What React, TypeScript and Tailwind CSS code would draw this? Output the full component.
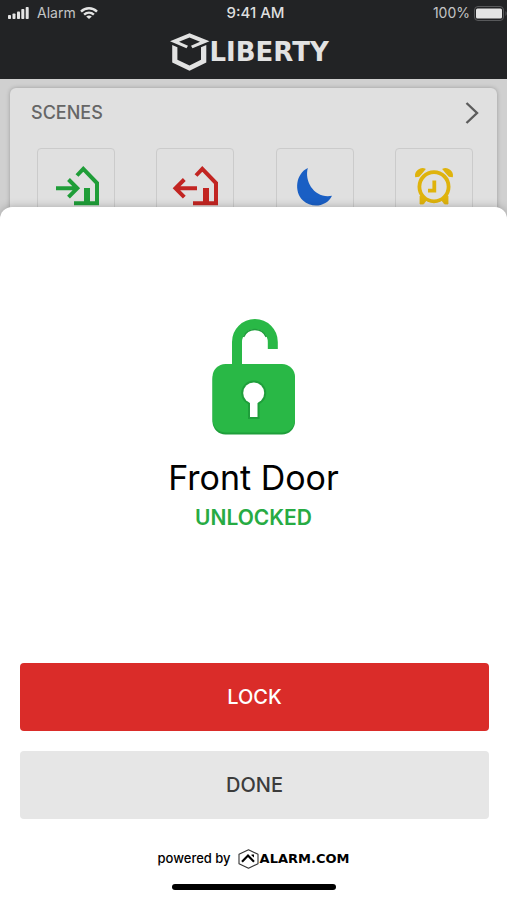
import React from 'react';

const HousePath = () => (
  <>
    <path d="M25 12.5 L31.3 5.8 L45 20 V40.2 H22" fill="none" stroke="currentColor" strokeWidth="4" />
    <path d="M32 25 H38 V40 H32 Z" fill="currentColor" />
  </>
);

const ArriveIcon = () => (
  <svg className="size-12 shrink-0 text-[#1f9d38]" viewBox="0 0 48 48" aria-hidden="true">
    <path d="M4 25.3 H25 M16.5 16.5 L25.3 25.3 L16.5 34.2" fill="none" stroke="currentColor" strokeWidth="4" />
    <HousePath />
  </svg>
);

const LeaveIcon = () => (
  <svg className="size-12 shrink-0 text-[#c22522]" viewBox="0 0 48 48" aria-hidden="true">
    <path d="M26 25.3 H5 M13.3 16.5 L4.5 25.3 L13.3 34.2" fill="none" stroke="currentColor" strokeWidth="4" />
    <HousePath />
  </svg>
);

const MoonIcon = () => (
  <svg className="size-12 shrink-0 text-[#1a5fc4]" viewBox="0 0 48 48" aria-hidden="true">
    <path d="M16.8 5 C13 19 24 36 41 32.8 C36 43.5 21 46 12 37.5 C2.5 28.5 5 10.5 16.8 5 Z" fill="currentColor" />
  </svg>
);

const ClockIcon = () => (
  <svg className="size-12 shrink-0 text-[#dfb30c]" viewBox="0 0 48 48" fill="none" stroke="currentColor" aria-hidden="true">
    <circle cx="24" cy="23.7" r="14.6" strokeWidth="3.8" />
    <path d="M24.3 17.5 V27.6 H18" strokeWidth="3.8" />
    <path d="M5.8 13.5 C5 8.5 10.5 4.5 14.7 6.2 L12 9.5 L8.8 13 Z M42.2 13.5 C43 8.5 37.5 4.5 33.3 6.2 L36 9.5 L39.2 13 Z" fill="currentColor" strokeWidth="1.4" />
    <path d="M10 33 V41 H13.5 L16.5 37 Z M38 33 V41 H34.5 L31.5 37 Z" fill="currentColor" strokeWidth="0.8" />
  </svg>
);

const scenes = [
  { name: 'Home', Icon: ArriveIcon },
  { name: 'Away', Icon: LeaveIcon },
  { name: 'Sleep', Icon: MoonIcon },
  { name: 'Wake up', Icon: ClockIcon },
];

const StatusBar = () => (
  <div className="grid grid-cols-3 items-center pl-2 pr-1 h-[26px] text-sm text-[#c4c5c6]">
    <div className="flex items-center gap-2">
      <svg className="w-[21px] h-3" viewBox="0 0 21 12" fill="#e4e4e4" aria-hidden="true">
        <rect x="0" y="8" width="3" height="4" rx="0.8" />
        <rect x="4.5" y="6.5" width="3" height="5.5" rx="0.8" />
        <rect x="9" y="4.5" width="3" height="7.5" rx="0.8" />
        <rect x="13.3" y="2" width="3" height="10" rx="0.8" />
        <rect x="17.7" y="0" width="3" height="12" rx="0.8" />
      </svg>
      <span>Alarm</span>
      <svg className="-ml-1 w-[18px] h-3" viewBox="0 0 18 12" fill="none" stroke="#e4e4e4" strokeWidth="2.4" aria-hidden="true">
        <path d="M1 4.6 C5.5 0.2 12.5 0.2 17 4.6" />
        <path d="M4.1 7.7 C7 5 11 5 13.9 7.7" />
        <path d="M6.2 9.4 C8 8.1 10 8.1 11.8 9.4 L9 12 Z" fill="#e4e4e4" stroke="none" />
      </svg>
    </div>
    <span className="text-center text-[15px] font-medium text-[#dededf]">9:41 AM</span>
    <div className="flex items-center justify-end gap-1">
      <span>100%</span>
      <svg className="-mr-1 w-[33px] h-[15px]" viewBox="0 0 33 15" aria-hidden="true">
        <rect x="0.5" y="0.5" width="29" height="14" rx="3.5" fill="none" stroke="#58595b" />
        <rect x="2" y="2.5" width="26" height="10" rx="1.5" fill="#e4e4e4" />
        <path d="M31.5 5 C33 6 33 9 31.5 10 Z" fill="#58595b" />
      </svg>
    </div>
  </div>
);

const LibertyLogo = () => (
  <div className="flex items-center mx-auto w-[168px] text-[#e2e2e2]">
    <svg className="w-10 h-[38px] shrink-0" viewBox="0 0 40 38" fill="currentColor" aria-hidden="true">
      <path fillRule="evenodd" d="M19.5 0.3 L39.5 8.3 L22.5 15.2 L21 12.8 L30 8.7 L19.5 4.6 L9 8.7 L18 12.8 L16.5 15.2 L0 8.3 Z" />
      <path d="M2.2 12 L7.4 14.2 V26.8 L19.5 32.5 L31 26.8 V14.2 L36.3 12 V29.6 L19.5 37.7 L2.2 29.6 Z" />
    </svg>
    <span className="font-['DejaVu_Sans'] text-[26px] leading-8 font-bold">LIBERTY</span>
  </div>
);

const UnlockedIcon = () => (
  <svg className="w-[84px] h-[116px]" viewBox="0 0 84 116" aria-hidden="true">
    <path d="M25 50 V23 A17.9 17.9 0 0 1 60.8 23 V30" fill="none" stroke="#29b846" strokeWidth="10" />
    <path d="M31.5 18 A12.4 12.4 0 0 1 54.3 18" fill="none" stroke="#1f9e3b" strokeWidth="1.6" />
    <rect x="0.5" y="47" width="82.5" height="68.5" rx="13" fill="#1f9e3b" />
    <rect x="0.5" y="45" width="82.5" height="68.5" rx="13" fill="#29b846" />
    <g fill="#fff" stroke="#1f9e3b" strokeWidth="4">
      <circle cx="41.7" cy="74" r="10.5" />
      <rect x="38" y="82" width="7.5" height="16" />
    </g>
    <g fill="#fff">
      <circle cx="41.7" cy="74" r="10.5" />
      <rect x="38" y="82" width="7.5" height="16" />
    </g>
  </svg>
);

const PoweredBy = () => (
  <div className="flex items-center justify-center h-5 text-[13px] font-medium text-black">
    <span>powered by</span>
    <svg className="ml-1.5 w-[23px] h-5 shrink-0" viewBox="0 0 23 20" fill="none" aria-hidden="true">
      <path d="M11.5 0.7 L21 5.3 V14.7 L11.5 19.3 L2 14.7 V5.3 Z" stroke="#333" strokeWidth="1.1" strokeLinejoin="round" />
      <path d="M5 12.8 L11 6.5 L17 12.8" stroke="#000" strokeWidth="2.2" />
      <path d="M14.5 5.5 H17 V8.5 L14.5 6.5 Z" fill="#000" />
    </svg>
    <span className="font-['DejaVu_Sans'] font-bold">ALARM.COM</span>
  </div>
);

export default function App() {
  return (
    <div className="flex flex-col min-h-screen bg-[#d0d0d0] font-['Inter',sans-serif]">
      <header className="h-[79px] bg-[#222325]">
        <StatusBar />
        <div className="pt-[7px]">
          <LibertyLogo />
        </div>
      </header>

      {/* Dashboard, mostly hidden by the sheet */}
      <section className="h-[140px] px-2.5 pt-[9px] overflow-hidden">
        <div className="rounded-md bg-[#e0e0e0] shadow-[0_0_4px_rgba(0,0,0,0.25)]">
          <div className="flex items-center justify-between h-[50px] pl-[21px] pr-[18px]">
            <h2 className="text-lg font-medium text-[#666]">SCENES</h2>
            <button type="button" aria-label="All scenes">
              <svg className="w-3.5 h-6" viewBox="0 0 14 24" fill="none" stroke="#5c5c5c" strokeWidth="2.4" aria-hidden="true">
                <path d="M1.5 2 L12 12 L1.5 22" />
              </svg>
            </button>
          </div>
          <div className="flex justify-between pl-[27px] pr-6 pt-2.5 pb-6">
            {scenes.map(({ name, Icon }) => (
              <button
                key={name}
                type="button"
                aria-label={name}
                className="flex justify-center w-[78px] h-[78px] pt-3.5 rounded border border-[#cbcbcb]"
              >
                <Icon />
              </button>
            ))}
          </div>
        </div>
      </section>

      <main className="relative flex flex-col grow -mt-3 pt-28 pb-2.5 rounded-t-xl bg-white shadow-[0_0_8px_rgba(0,0,0,0.25)]">
        <div className="flex flex-col items-center">
          <UnlockedIcon />
          <h1 className="mt-[23px] text-[34px] leading-10 text-black">Front Door</h1>
          <p className="mt-1.5 text-[21px] leading-7 font-semibold text-[#27ab43]">UNLOCKED</p>
        </div>

        <div className="flex flex-col gap-5 mt-auto pl-5 pr-[18px]">
          <button type="button" className="h-[68px] rounded bg-[#da2c29] text-xl font-medium text-white">
            LOCK
          </button>
          <button type="button" className="h-[68px] rounded bg-[#e6e6e6] text-xl font-medium text-[#3c3c3c]">
            DONE
          </button>
        </div>

        <footer className="pt-[30px]">
          <PoweredBy />
          <div className="mx-auto mt-[15px] w-[164px] h-1.5 rounded-full bg-black" />
        </footer>
      </main>
    </div>
  );
}
